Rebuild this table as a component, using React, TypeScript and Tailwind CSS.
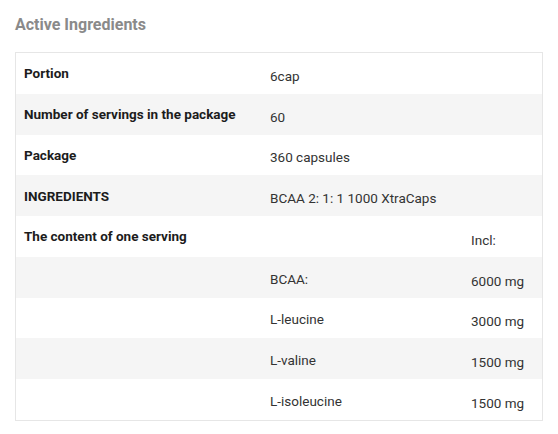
const ROWS = [
  { label: "Portion", value: "6cap" },
  { label: "Number of servings in the package", value: "60" },
  { label: "Package", value: "360 capsules" },
  { label: "INGREDIENTS", value: "BCAA 2: 1: 1 1000 XtraCaps" },
];

const AMOUNTS = [
  { name: "BCAA:", amount: "6000 mg" },
  { name: "L-leucine", amount: "3000 mg" },
  { name: "L-valine", amount: "1500 mg" },
  { name: "L-isoleucine", amount: "1500 mg" },
];

function rowBg(i: number) {
  return i % 2 === 1 ? "bg-[#f5f5f5]" : "bg-white";
}

export default function App() {
  return (
    <div className="h-[434px] w-[558px] bg-white px-[15px] pt-[13px] font-['Roboto',sans-serif]">
      <h2 className="text-[16px] font-bold leading-6 text-[#8a8a8a]">
        Active Ingredients
      </h2>
      <div className="mt-[15px] w-[528px] border border-[#e6e6e6]">
        {ROWS.map((r, i) => (
          <div
            key={r.label}
            className={`grid h-[40.75px] grid-cols-[246px_1fr] items-center ${rowBg(i)}`}
          >
            <span className="pl-2 text-[13.5px] font-bold text-[#1c1c1c]">
              {r.label}
            </span>
            <span className="pl-2 pt-[5px] text-[13.5px] text-[#333]">
              {r.value}
            </span>
          </div>
        ))}
        <div className="grid h-[40.75px] grid-cols-[246px_201px_1fr] items-center bg-white">
          <span className="pl-2 text-[13.5px] font-bold text-[#1c1c1c]">
            The content of one serving
          </span>
          <span />
          <span className="pl-2 pt-[7px] text-[13.5px] text-[#333]">Incl:</span>
        </div>
        {AMOUNTS.map((a, i) => (
          <div
            key={a.name}
            className={`grid h-[40.75px] grid-cols-[246px_201px_1fr] items-center ${rowBg(i + 1)}`}
          >
            <span />
            <span className="pl-2 pt-[3px] text-[13.5px] text-[#333]">
              {a.name}
            </span>
            <span className="pl-2 pt-[7px] text-[13.5px] text-[#333]">
              {a.amount}
            </span>
          </div>
        ))}
      </div>
    </div>
  );
}
